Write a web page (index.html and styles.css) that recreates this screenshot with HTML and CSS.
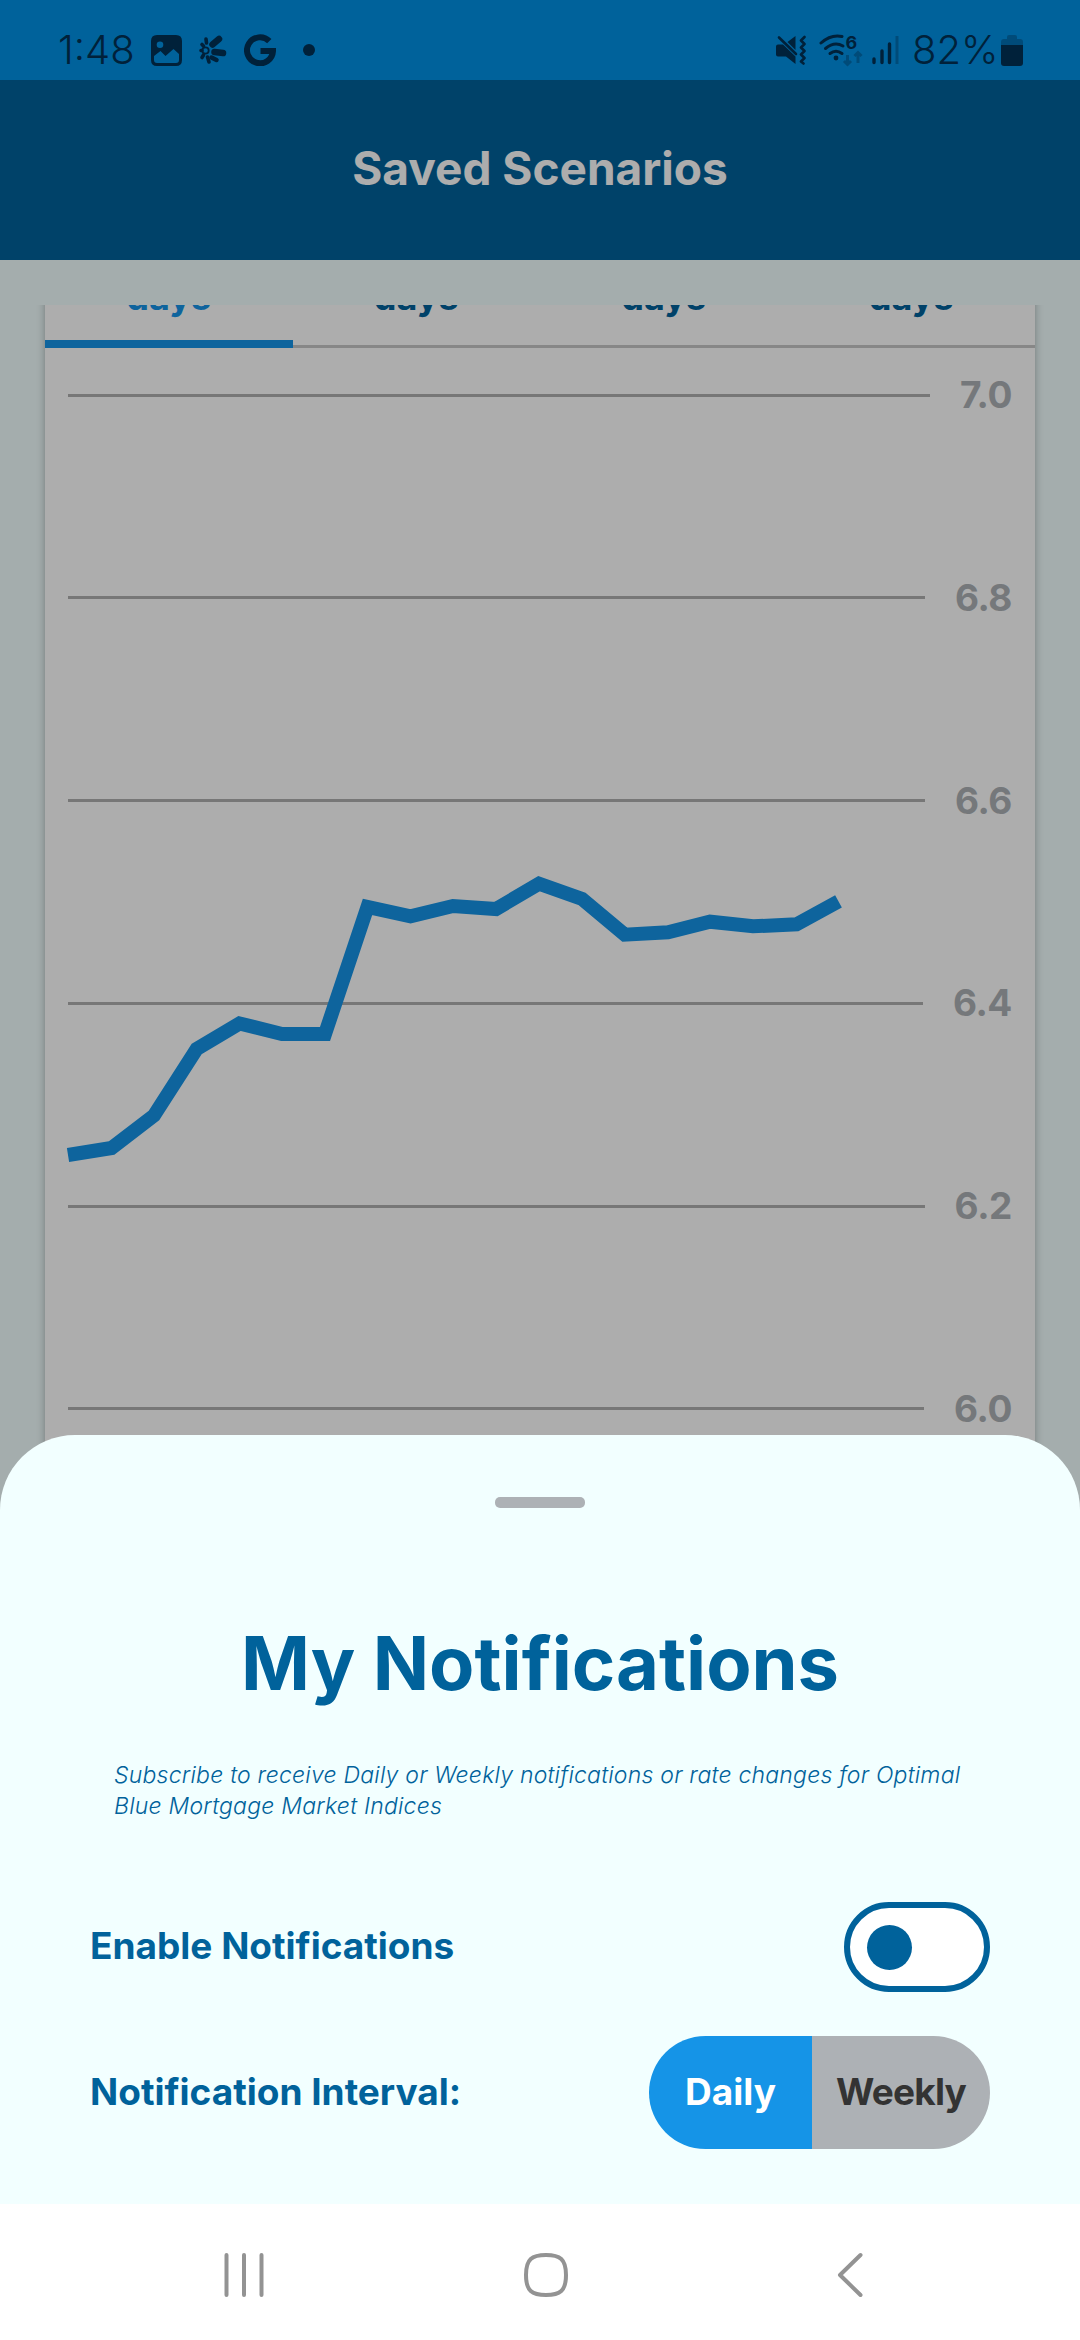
FILE: index.html
```html
<!DOCTYPE html>
<html lang="en">
<head>
  <meta charset="UTF-8">
  <title>Saved Scenarios</title>
  <link rel="stylesheet" href="styles.css">
</head>
<body>
  <div class="status-bar">
    <span class="clock">1:48</span>
    <svg class="icon-photo" width="31" height="31" viewBox="0 0 31 31">
      <path fill-rule="evenodd" d="M6 0H25Q31 0 31 6V25Q31 31 25 31H6Q0 31 0 25V6Q0 0 6 0ZM9 6.5A3.3 3.3 0 1 0 9 13.1A3.3 3.3 0 1 0 9 6.5ZM3 21V25Q3 28 6 28H25Q28 28 28 25V19L22.5 14L14.5 21L9.5 16Z"/>
    </svg>
    <svg class="icon-pinwheel" width="28" height="30" viewBox="0 0 28 30">
      <g stroke="#00213a" stroke-linecap="round" fill="none">
        <path stroke-width="6.5" d="M13.5 9.5L20 4M15.500 17L24 18"/>
        <path stroke-width="4.5" d="M12.500 22.500L17.500 25"/>
        <path stroke-width="3.6" d="M8.500 22L10 27M4.500 20L3 22.500M3 15.500H2M4.500 11L3 9.500M7.500 8L7 4"/>
        <circle cx="6.500" cy="15.5" r="3.2" stroke-width="1.8"/>
      </g>
    </svg>
    <svg class="icon-g" width="32" height="32" viewBox="0 0 32 32">
      <path fill="none" stroke="#00213a" stroke-width="6" d="M25.3 7.2A13 13 0 1 0 29 17H16.5"/>
    </svg>
    <span class="dot"></span>

    <div class="status-right">
      <svg width="31" height="30" viewBox="0 0 31 30">
        <path d="M0 11.500Q0 9.500 2 9.500H7L19.500 21.500V29L10 21.500H2Q0 21.500 0 19.500ZM11.500 7L19.500 1V15Z"/>
        <path fill="none" stroke="#00213a" stroke-width="2.6" stroke-linecap="round" d="M3 2.500L20 19"/>
        <path fill="none" stroke="#00213a" stroke-width="2.6" stroke-linecap="round" stroke-linejoin="round" d="M28.500 2L25 5.5L28.500 9L25 12.500L28.500 16L25 19.500L28.500 23L25 26.500L27.500 28.500"/>
      </svg>
      <svg class="icon-wifi" width="44" height="34" viewBox="0 0 44 34">
        <g fill="none" stroke="#00213a" stroke-width="3" stroke-linecap="round">
          <path d="M2 10Q12 1 23 3.500"/>
          <path d="M6.500 15.500Q15.500 8 24 13"/>
          <path d="M11 20.500Q17 16 23 20.500"/>
        </g>
        <circle cx="17" cy="25" r="2.4"/>
        <text x="26.500" y="15.500" class="wifi-gen">6</text>
        <path class="faint" d="M28.500 22V31M25 28L28.500 31.500L32 28M39 30V20M35.500 23L39 19.500L42.500 23"/>
      </svg>
      <svg class="icon-signal" width="27" height="30" viewBox="0 0 27 30">
        <path fill="none" stroke="#00213a" stroke-width="3.400" stroke-linecap="round" d="M2 24V27.500M10 16V27.500M17.500 9V27.500"/>
        <path class="faint" d="M25 1V29"/>
      </svg>
      <span class="battery-level">82%</span>
      <svg class="icon-battery" width="22" height="31" viewBox="0 0 22 31">
        <path opacity=".35" d="M6 2Q6 0 8 0H14Q16 0 16 2V4H19Q22 4 22 7V10H0V7Q0 4 3 4H6Z"/>
        <path d="M0 10H22V28Q22 31 19 31H3Q0 31 0 28Z"/>
      </svg>
    </div>
  </div>

  <div class="screen">
    <div class="header">Saved Scenarios</div>
    <div class="scroller">
      <div class="card">
        <div class="tabs">
          <div class="tab active">days</div>
          <div class="tab">days</div>
          <div class="tab">days</div>
          <div class="tab">days</div>
        </div>
        <div class="chart">
          <div class="grid-row"><span>7.0</span></div>
          <div class="grid-row"><span>6.8</span></div>
          <div class="grid-row"><span>6.6</span></div>
          <div class="grid-row"><span>6.4</span></div>
          <div class="grid-row"><span>6.2</span></div>
          <div class="grid-row"><span>6.0</span></div>
          <svg class="rate-line" width="990" height="1100" viewBox="45 348 990 1100">
            <polyline points="68,1155 111.500,1148 154,1115.500 196.700,1049 239.500,1023.500 282,1034 325,1034 367.500,907 410.500,916.300 453,906 496,909 539,883.700 582,899 624.700,934.700 668,932.300 710,921.700 753,926.300 796.500,924.300 838.500,901.300"/>
          </svg>
        </div>
      </div>
    </div>

    <div class="backdrop"></div>

    <div class="sheet">
      <div class="handle"></div>
      <h1>My Notifications</h1>
      <p class="description">Subscribe to receive Daily or Weekly notifications or rate changes for Optimal Blue Mortgage Market Indices</p>
      <div class="row enable-row">
        <span>Enable Notifications</span>
        <div class="toggle"><div class="knob"></div></div>
      </div>
      <div class="row interval-row">
        <span>Notification Interval:</span>
        <div class="segmented">
          <div class="segment selected">Daily</div>
          <div class="segment">Weekly</div>
        </div>
      </div>
    </div>
  </div>

  <div class="nav-bar">
    <svg width="40" height="48" viewBox="0 0 40 48"><path d="M2.500 4V44M20 4V44M37.500 4V44"/></svg>
    <svg class="home" width="48" height="48" viewBox="0 0 48 48"><path d="M24 4C38 4 44 8 44 24S38 44 24 44S4 40 4 24S10 4 24 4Z"/></svg>
    <svg width="26" height="48" viewBox="0 0 26 48"><path d="M23.500 4L3 24L23.500 44"/></svg>
  </div>
</body>
</html>
```
FILE: styles.css
```css
* {
  box-sizing: border-box;
}

body {
  margin: 0;
  display: flex;
  flex-direction: column;
  width: 1080px;
  height: 2340px;
  overflow: hidden;
  font-family: Inter, sans-serif;
  color: #00629b;
}

svg {
  display: block;
  flex-shrink: 0;
}

/* Status bar */
.status-bar {
  display: flex;
  align-items: center;
  height: 80px;
  padding: 20px 57px 0 58px;
  background-color: #00629b;
  color: #00213a;
  fill: #00213a;
}

.clock, .battery-level {
  font-size: 40px;
  font-weight: 350;
  line-height: 40px;
}

.clock {
  width: 77px;
}

.icon-photo {
  margin-left: 16px;
}

.icon-pinwheel {
  margin-left: 17px;
}

.icon-g {
  margin-left: 17px;
}

.dot {
  width: 12px;
  height: 12px;
  margin-left: 27px;
  border-radius: 50%;
  background-color: #00213a;
}

.status-right {
  display: flex;
  align-items: center;
  margin-left: auto;
}

.icon-wifi {
  margin-left: 12px;
}

.wifi-gen {
  font-size: 18px;
  font-weight: 700;
}

.faint {
  fill: none;
  stroke: #00213a;
  stroke-width: 3;
  opacity: .35;
}

.icon-signal {
  margin-left: 9px;
}

.battery-level {
  width: 89px;
  margin-left: 13px;
}

/* Page behind the sheet */
.screen {
  position: relative;
  display: flex;
  flex-direction: column;
  height: 2124px;
  background-color: #f2ffff;
  overflow: hidden;
}

.header {
  display: flex;
  align-items: center;
  justify-content: center;
  height: 180px;
  padding-bottom: 4px;
  background-color: #00629b;
  color: #fff;
  font-size: 46px;
  font-weight: 700;
}

.scroller {
  height: 1300px;
  margin-top: 45px;
  padding: 0 45px;
  overflow: hidden;
}

/* scrolled up, the tab labels are cut by the scroller */
.card {
  height: 1500px;
  margin-top: -60px;
  background-color: #fff;
  box-shadow: 0 0 8px rgba(0, 0, 0, 0.3);
}

.tabs {
  display: flex;
  height: 103px;
}

.tab {
  flex: 1;
  padding-top: 32px;
  border-bottom: 3px solid #c8c8c8;
  font-size: 36px;
  font-weight: 700;
  line-height: 40px;
  text-align: center;
}

.tab.active {
  border-bottom: 8px solid #1594e7;
  color: #1594e7;
}

.chart {
  position: relative;
  padding: 27px 23px 0;
}

.grid-row {
  display: flex;
  align-items: center;
  gap: 30px;
  height: 40px;
  margin-bottom: 162.8px;
  color: #adb1b5;
  font-size: 37px;
  font-weight: 700;
  letter-spacing: -0.4px;
}

.grid-row span {
  margin-bottom: 1px;
}

.grid-row::before {
  content: "";
  flex: 1;
  height: 3px;
  background-color: #b0b0b0;
}

.rate-line {
  position: absolute;
  top: 0;
  left: 0;
}

.rate-line polyline {
  fill: none;
  stroke: #1594e7;
  stroke-width: 14;
}

.backdrop {
  position: absolute;
  inset: 0;
  background-color: rgba(0, 0, 0, 0.32);
}

/* Notifications sheet */
.sheet {
  position: absolute;
  left: 0;
  right: 0;
  bottom: 0;
  height: 769px;
  padding: 62px 90px 0;
  border-radius: 75px 75px 0 0;
  background-color: #f2ffff;
}

.handle {
  width: 90px;
  height: 11px;
  margin: 0 auto;
  border-radius: 5px;
  background-color: #adb1b5;
}

h1 {
  margin: 110px 0 0;
  font-size: 74px;
  font-weight: 700;
  line-height: 90px;
  text-align: center;
}

.description {
  margin: 52px 20px 0 24px;
  font-size: 23px;
  font-style: italic;
  font-weight: 350;
  line-height: 31px;
  letter-spacing: 0.22px;
}

.row {
  display: flex;
  align-items: center;
  justify-content: space-between;
  font-size: 37px;
  font-weight: 700;
}

.row span {
  margin-bottom: 3px;
}

.enable-row {
  margin-top: 80px;
}

.interval-row {
  margin-top: 44px;
}

.toggle {
  display: flex;
  align-items: center;
  width: 146px;
  height: 90px;
  padding-left: 17px;
  border: 6px solid #00629b;
  border-radius: 45px;
  background-color: #fff;
}

.knob {
  width: 45px;
  height: 45px;
  border-radius: 50%;
  background-color: #00629b;
}

.segmented {
  display: flex;
  width: 341px;
  height: 113px;
  border-radius: 57px;
  overflow: hidden;
}

.segment {
  display: flex;
  flex: 1;
  align-items: center;
  justify-content: center;
  padding-bottom: 2px;
  background-color: #adb1b5;
  color: #333;
  letter-spacing: -0.8px;
}

.segment.selected {
  flex: none;
  width: 163px;
  background-color: #1594e7;
  color: #fff;
  letter-spacing: 0;
}

/* System navigation */
.nav-bar {
  display: flex;
  align-items: center;
  justify-content: space-between;
  height: 136px;
  padding: 6px 217px 0 224px;
  background-color: #fff;
}

.nav-bar path {
  fill: none;
  stroke: #939393;
  stroke-width: 4;
  stroke-linecap: round;
  stroke-linejoin: round;
}

.nav-bar .home {
  margin-right: 9px;
}
```
